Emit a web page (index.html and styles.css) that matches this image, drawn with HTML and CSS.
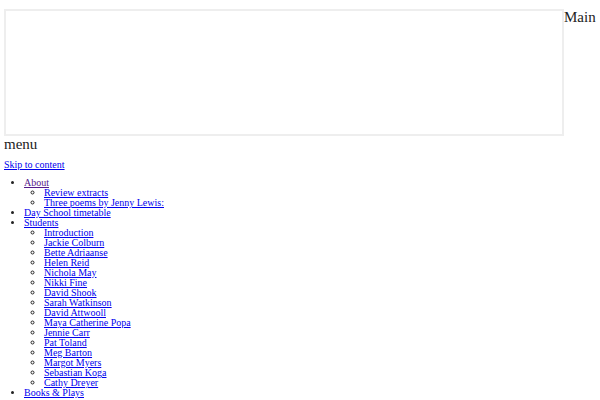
FILE: index.html
```html
<!DOCTYPE html>
<html>
<head>
<meta charset="utf-8">
<link rel="stylesheet" href="styles.css">
</head>
<body>
<h2 class="menu-title"><span class="menu-box"></span>Main menu</h2>
<div class="skip"><a href="#content">Skip to content</a></div>
<ul class="nav">
  <li><a class="visited" href="#">About</a>
    <ul>
      <li><a href="#">Review extracts</a></li>
      <li><a href="#">Three poems by Jenny Lewis:</a></li>
    </ul>
  </li>
  <li><a href="#">Day School timetable</a></li>
  <li><a href="#">Students</a>
    <ul>
      <li><a href="#">Introduction</a></li>
      <li><a href="#">Jackie Colburn</a></li>
      <li><a href="#">Bette Adriaanse</a></li>
      <li><a href="#">Helen Reid</a></li>
      <li><a href="#">Nichola May</a></li>
      <li><a href="#">Nikki Fine</a></li>
      <li><a href="#">David Shook</a></li>
      <li><a href="#">Sarah Watkinson</a></li>
      <li><a href="#">David Attwooll</a></li>
      <li><a href="#">Maya Catherine Popa</a></li>
      <li><a href="#">Jennie Carr</a></li>
      <li><a href="#">Pat Toland</a></li>
      <li><a href="#">Meg Barton</a></li>
      <li><a href="#">Margot Myers</a></li>
      <li><a href="#">Sebastian Koga</a></li>
      <li><a href="#">Cathy Dreyer</a></li>
    </ul>
  </li>
  <li><a href="#">Books &amp; Plays</a></li>
</ul>
</body>
</html>
```
FILE: styles.css
```css
body {
  margin: 4px;
  font-family: "Liberation Serif", "DejaVu Serif", serif;
  font-size: 10px;
  line-height: 10px;
  color: #222;
  background: #fff;
}
.menu-title {
  margin: 5px 0 8px;
  font-size: 15px;
  line-height: 16px;
  font-weight: normal;
  color: #222;
}
.menu-box {
  display: inline-block;
  vertical-align: top;
  width: 556px;
  height: 123px;
  border: 2px solid #eeeeee;
}
.skip {
  margin: 0;
}
a {
  color: #0000ee;
}
a.visited {
  color: #551a8b;
}
.nav {
  margin: 8px 0 0;
  padding-left: 20px;
}
.nav ul {
  margin: 0;
  padding-left: 20px;
}
```
